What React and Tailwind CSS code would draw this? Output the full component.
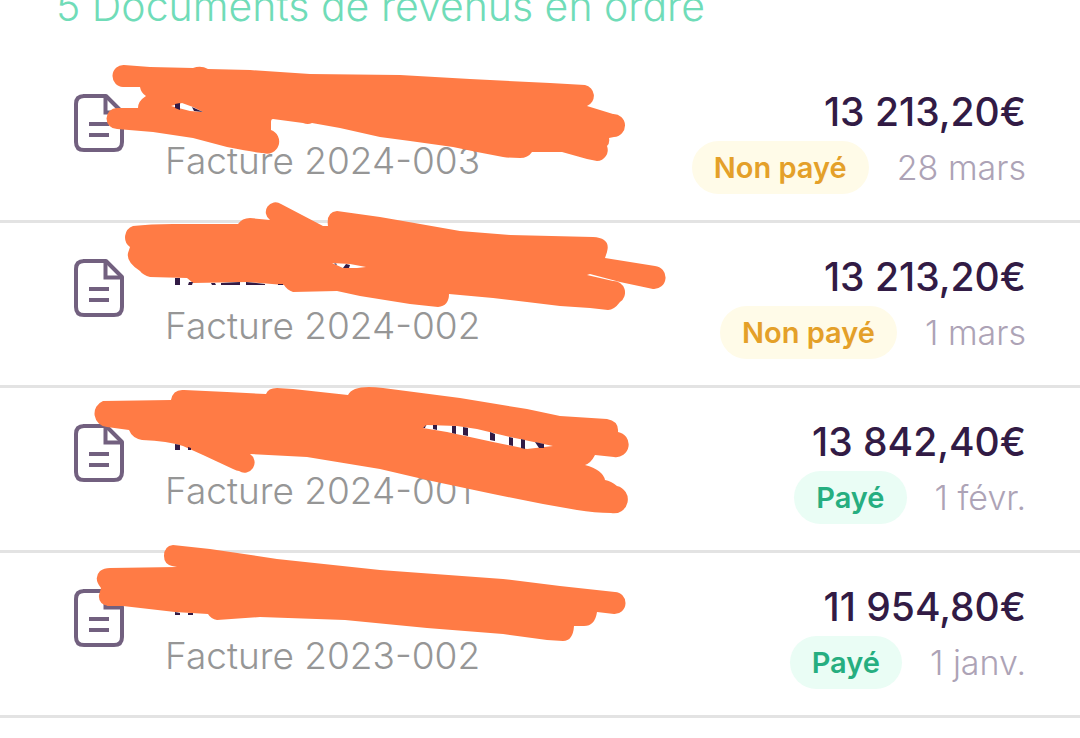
import React from 'react';

const invoices = [
  {
    id: '2024-003',
    amount: '13 213,20€',
    paid: false,
    date: '28 mars',
    scribble: {
      viewBox: '0 58 700 165',
      ink: 'M124 65 L150 67 L193 68 Q201 65 208 69 L250 70 L310 74 L400 75 L470 79 L550 83 L585 85 A11 11 0 0 1 587 106 L600 110 L613 114 A11.500 11.500 0 0 1 614 137 L609 138 Q610 143 607 146 A11 11 0 0 1 597 161 L587 159 L562 152 L532 152 Q528 158 520 158 Q511 158 503 157 L477 152 L453 147 L410 141 L380 137 L340 128 L312 123 Q308 125 303 123 L273 119 Q271 119 271 122 L271 130 A12 12 0 0 1 263 153 Q258 153 227 147 L193 138 L153 132 L117 129 A10.500 10.500 0 0 1 117 108 L138 108 Q138 101 146 96 Q141 93 140 87 L123 87 A11 11 0 0 1 124 65Z',
      gap: 'M171 106 L182 103 L193 107 L203 112 L190 111Z',
      traces: 'M175 104 L180 103 V110 L175 108Z M192 107 L203 112 L194 111Z',
    },
  },
  {
    id: '2024-002',
    amount: '13 213,20€',
    paid: false,
    date: '1 mars',
    scribble: {
      viewBox: '0 223 700 165',
      ink: 'M133 226 Q150 224 173 224 L238 224 Q242 218 250 218 L270 220 A9.500 9.500 0 0 1 281 204 L323 226 L328 226 Q326 212 337 211 L380 217 L403 221 L460 231 L510 235 L593 237 Q611 238 607 252 L605 258 L655 266 A11.500 11.500 0 0 1 653 289 L620 282 L590 274 L587 275 L613 281 A11.500 11.500 0 0 1 620 302 Q614 310 608 310 L590 308 L560 306 L527 302 L493 298 L449 294 Q449 306 438 307 L410 304 L360 296 L337 291 L293 292 Q287 290 284 285 L247 282 L193 283 L187 278 L150 277 Q143 275 140 271 Q126 262 128 253 L130 247 A12 12 0 0 1 133 226Z',
      gap: 'M332 263 L350 264 L366 267 L357 268 L343 268Z',
      traces:
        'M175 278 H180 V285 H175Z M189 282 H193 L192 285 H188Z M211 283 H215 L216 285 H212Z M221 283 L240 282 V285 H221Z M246 282 L265 284 V285 H246Z M278 284 H283 V285 H278Z M334 263 L337 264 L336 265Z M346 264 L350 265 L349 268 H343Z',
    },
  },
  {
    id: '2024-001',
    amount: '13 842,40€',
    paid: true,
    date: '1 févr.',
    scribble: {
      viewBox: '0 388 700 165',
      ink: 'M103 401 L171 400 Q173 389 184 390 L227 392 L266 394 Q268 388 277 388 L293 389 L348 395 Q353 384 383 388 L460 398 L527 409 L560 416 L607 419 Q619 421 618 432 A12.500 12.500 0 0 1 614 457 L595 455 Q591 463 585 465 Q603 470 605 480 Q611 481 617 486 A13.500 13.500 0 0 1 611 513 Q595 513 577 510 L543 504 L493 494 L427 480 L380 469 L307 457 L250 454 A10 10 0 0 1 239 471 Q237 471 233 469 L203 455 L183 446 Q168 441 142 440 Q132 438 129 430 L107 427 A13.500 13.500 0 0 1 103 401Z',
      gap: 'M423 428 L427 425 L457 426 L477 429 L510 437 L553 446 L527 449 L493 442 L447 432Z',
      traces:
        'M175 444 L180 445 V450 H175Z M188 447 L191 448 V450 H188Z M423 428 L426 425 L425 428Z M433 425 H437 V430 L433 429Z M452 426 H456 V434 L452 433Z M463 427 L468 428 V436 L463 435Z M490 432 L495 434 V441 L490 440Z M509 437 L513 438 V446 L509 445Z M521 439 L525 440 V449 L521 448Z M535 442 L544 444 V448 L539 448Z',
    },
  },
  {
    id: '2023-002',
    amount: '11 954,80€',
    paid: true,
    date: '1 janv.',
    scribble: {
      viewBox: '0 553 700 165',
      ink: 'M173 545 L210 549 L277 559 L380 570 L503 579 L560 586 L615 592 A11 11 0 0 1 614 614 L597 612 Q595 626 584 626 L574 626 Q573 641 563 641 L547 640 L503 634 L427 628 L345 620 L260 617 L217 620 Q211 619 208 614 L175 612 L123 606 L108 606 Q98 604 99 595 L101 588 Q93 578 100 571 Q104 568 110 568 L177 567 L172 566 Q164 564 164 556 Q164 546 173 545Z',
      gap: '',
      traces: 'M175 612 L180 613 V615 H175Z M188 613 H193 V615 H188Z',
    },
  },
];

function DocumentIcon() {
  return (
    <svg
      className="h-[58px] w-[50px] shrink-0"
      viewBox="0 0 50 58"
      fill="none"
      stroke="#72607f"
      strokeWidth="4"
      aria-hidden="true"
    >
      <path d="M9 2H32L48 18V48Q48 56 40 56H10Q2 56 2 48V10Q2 2 10 2" strokeLinejoin="round" />
      <path d="M31.500 2V18.500H48" />
      <path d="M15 30H35M15 41H35" />
    </svg>
  );
}

function Scribble({ viewBox, ink, gap, traces }) {
  return (
    <svg
      className="pointer-events-none absolute top-0 left-0 h-[165px] w-[700px] overflow-visible"
      viewBox={viewBox}
      aria-hidden="true"
    >
      <path d={ink} fill="#ff7b45" />
      {gap && <path d={gap} fill="#fff" />}
      <path d={traces} fill="#321b45" />
    </svg>
  );
}

function StatusBadge({ paid }) {
  return (
    <span
      className={
        paid
          ? 'rounded-full bg-[#eafdf5] px-[22px] py-3 text-[29px] leading-[29px] font-semibold text-[#26ae80]'
          : 'rounded-full bg-[#fffbe8] px-[22px] py-3 text-[29px] leading-[29px] font-semibold text-[#e4a029]'
      }
    >
      {paid ? 'Payé' : 'Non payé'}
    </span>
  );
}

function InvoiceRow({ invoice }) {
  return (
    <li className="relative flex h-[165px] items-start border-b-3 border-[#e3e3e3] pr-[54px] pl-[74px]">
      <div className="pt-9">
        <DocumentIcon />
      </div>
      <p className="ml-[41px] pt-[81px] text-[37px] leading-[44px] font-light whitespace-nowrap text-[#969696]">
        Facture {invoice.id}
      </p>
      <div className="ml-auto flex flex-col items-end pt-[30px] whitespace-nowrap">
        <p className="text-[39px] leading-[48px] font-medium text-[#321b45]">{invoice.amount}</p>
        <div className="mt-[5px] flex items-center gap-7">
          <StatusBadge paid={invoice.paid} />
          <span className="text-[34px] leading-[44px] font-light text-[#ada3b6]">{invoice.date}</span>
        </div>
      </div>
      <Scribble {...invoice.scribble} />
    </li>
  );
}

function App() {
  return (
    <main className="flex flex-col overflow-hidden bg-white pb-5 font-['Inter','Liberation_Sans',sans-serif]">
      <header className="flex h-[58px] items-start pl-14">
        <h1 className="-mt-[18px] text-[41px] leading-[48px] font-light whitespace-nowrap text-[#70dcb8]">
          5 Documents de revenus en ordre
        </h1>
      </header>
      <ul>
        {invoices.map((invoice) => (
          <InvoiceRow key={invoice.id} invoice={invoice} />
        ))}
      </ul>
    </main>
  );
}

export default App;
